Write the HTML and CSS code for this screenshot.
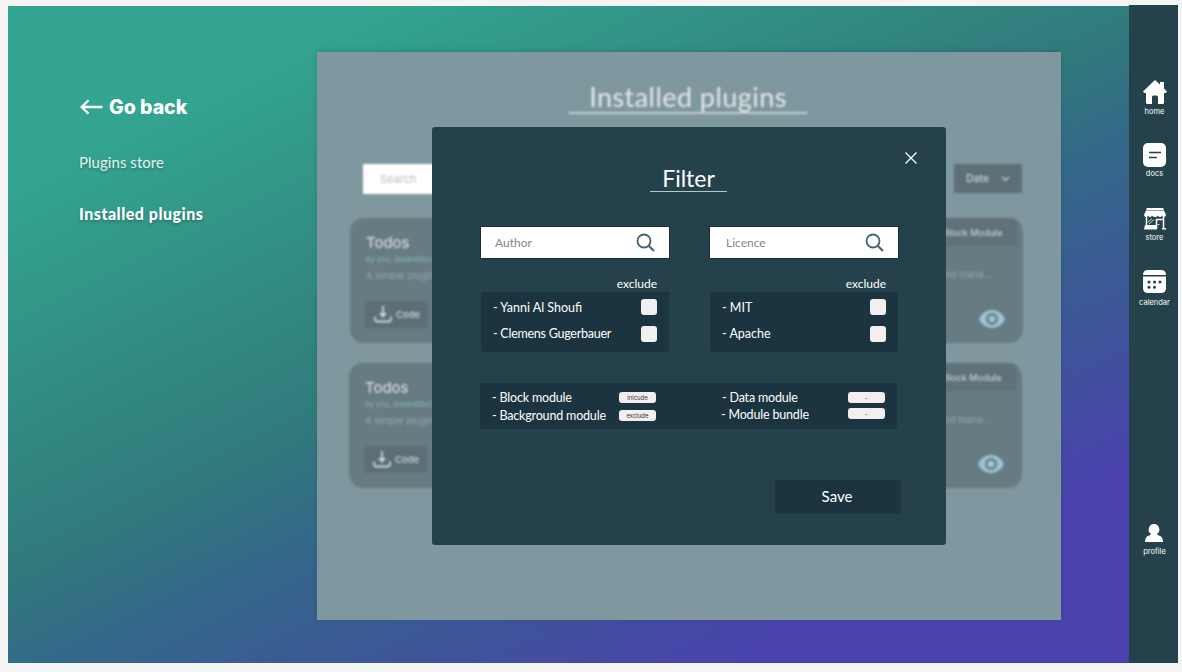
FILE: index.html
```
<!DOCTYPE html>
<html lang="en">
<head>
<meta charset="utf-8">
<title>Installed plugins</title>
<link rel="stylesheet" href="styles.css">
</head>
<body>
<svg class="defs" aria-hidden="true">
  <symbol id="i-search" viewBox="0 0 20 20"><circle cx="8" cy="8" r="6.5" fill="none" stroke="currentColor" stroke-width="1.8"/><path d="M12.7 12.7 18 18" stroke="currentColor" stroke-width="2"/></symbol>
  <symbol id="i-download" viewBox="0 0 18 17"><path d="M9 0v9M1 10.500V13a2.500 2.500 0 0 0 2.500 2.500h11A2.500 2.500 0 0 0 17 13v-2.500" fill="none" stroke="currentColor" stroke-width="1.800"/><path d="M5 7h8l-4 5z" fill="currentColor"/></symbol>
  <symbol id="i-eye" viewBox="0 0 26 18"><path fill="currentColor" fill-rule="evenodd" d="M13 0C7 0 2.500 3.500 0 9c2.500 5.500 7 9 13 9s10.500-3.500 13-9C23.500 3.500 19 0 13 0zm0 15a6 6 0 1 1 0-12 6 6 0 0 1 0 12zm0-2.500a3.500 3.500 0 1 0 0-7 3.500 3.500 0 0 0 0 7z"/></symbol>
</svg>
<div class="frame-label">Frame 26</div>
<div class="app">
  <nav class="side">
    <a class="back"><svg width="23" height="16" viewBox="0 0 23 16"><path d="M22.500 8H2M8.500 1.200 1.700 8l6.800 6.800" fill="none" stroke="#fff" stroke-width="2.300"/></svg><span>Go back</span></a>
    <a class="link">Plugins store</a>
    <a class="link current">Installed plugins</a>
  </nav>
  <main class="panel">
    <div class="content">
      <h1 class="title">Installed plugins</h1>
      <div class="tools"><div class="search">Search</div><div class="date">Date <svg width="9" height="6" viewBox="0 0 9 6"><path d="m1 1 3.500 3.500L8 1" fill="none" stroke="currentColor" stroke-width="1.200"/></svg></div></div>
      <section class="card">
        <div class="card-main"><h2>Todos</h2><p class="by">by you, lawandibo7</p><p class="desc">A simple plugin</p><div class="code"><svg width="18" height="17"><use href="#i-download"/></svg>Code</div></div>
        <div class="card-side"><div class="tag">Block Module</div><p class="more">and mana...</p><svg class="eye" width="26" height="18"><use href="#i-eye"/></svg></div>
      </section>
      <section class="card second">
        <div class="card-main"><h2>Todos</h2><p class="by">by you, lawandibo7</p><p class="desc">A simple plugin</p><div class="code"><svg width="18" height="17"><use href="#i-download"/></svg>Code</div></div>
        <div class="card-side"><div class="tag">Block Module</div><p class="more">and mana...</p><svg class="eye" width="26" height="18"><use href="#i-eye"/></svg></div>
      </section>
    </div>
    <div class="modal">
      <svg class="close" width="12" height="12" viewBox="0 0 12 12"><path d="M.5.500l11 11M11.500.500l-11 11" stroke="#fff" stroke-width="1.300"/></svg>
      <h2 class="modal-title">Filter</h2>
      <div class="columns">
        <div class="column">
          <div class="field"><span class="author">Author</span><svg width="20" height="20"><use href="#i-search"/></svg></div>
          <div class="exclude">exclude</div>
          <div class="list"><div class="row"><span>- Yanni Al Shoufi</span><i class="check"></i></div><div class="row"><span class="narrow">- Clemens Gugerbauer</span><i class="check"></i></div></div>
        </div>
        <div class="column">
          <div class="field"><span class="licence">Licence</span><svg width="20" height="20"><use href="#i-search"/></svg></div>
          <div class="exclude">exclude</div>
          <div class="list"><div class="row"><span>- MIT</span><i class="check"></i></div><div class="row"><span>- Apache</span><i class="check"></i></div></div>
        </div>
      </div>
      <div class="modules">
        <div class="group"><div class="mod"><span>- Block module</span><b class="pill">inlcude</b></div><div class="mod"><span>- Background module</span><b class="pill">exclude</b></div></div>
        <div class="group tight"><div class="mod"><span class="data">- Data module</span><b class="pill">-</b></div><div class="mod"><span class="bundle">- Module bundle</span><b class="pill">-</b></div></div>
      </div>
      <div class="save">Save</div>
    </div>
  </main>
  <aside class="rail">
    <a class="item home"><svg width="24" height="24" viewBox="0 0 24 24"><path fill="#fff" d="M12 0 0 11.500 1.200 13H3v9.500Q3 24 4.500 24H9v-7q0-1.500 1.500-1.500h3Q15 15.500 15 17v7h4.500q1.500 0 1.500-1.500V13h1.800l1.200-1.500-3-3V2h-4v2.500z"/></svg><span>home</span></a>
    <a class="item docs"><svg width="23" height="24" viewBox="0 0 23 24"><rect width="23" height="24" rx="5" fill="#fff"/><path d="M6 9.500h12M6 14.500h8" stroke="#25424c" stroke-width="1.600"/></svg><span>docs</span></a>
    <a class="item store"><svg width="22" height="22" viewBox="0 0 22 22"><path fill="#fff" d="M2.500 0h17v2h-17zM2 2.500h18l2 4.500q-.3 2-2 2t-2-1.500Q17.300 9 16 9t-2-1.500Q13 9 11 9T8 7.500Q7.300 9 6 9T4 7.500Q3.500 9 2 9T0 7z"/><path d="M2.500 8v11.500M19.500 8v13M12.500 21v-9.500h6" fill="none" stroke="#fff" stroke-width="1.500"/><path d="M1 17h11.500v4.500H0zM18 20h4v1.500h-4z" fill="#fff"/><path d="m4 14 4-3.500M5 16l5-4.500" stroke="#fff" stroke-width=".8"/><path d="M13.800 16.500h1.500" stroke="#fff"/></svg><span>store</span></a>
    <a class="item calendar"><svg width="23" height="23" viewBox="0 0 23 23"><path fill="#fff" d="M0 5q0-5 5-5h13q5 0 5 5zM0 6.500h23V18q0 5-5 5H5q-5 0-5-5z"/><g fill="#25424c"><circle cx="6" cy="12" r="1.500"/><circle cx="11.500" cy="12" r="1.500"/><circle cx="17" cy="12" r="1.500"/><circle cx="6" cy="17.300" r="1.500"/><circle cx="11.500" cy="17.300" r="1.500"/></g></svg><span>calendar</span></a>
    <a class="item profile"><svg width="18" height="18" viewBox="0 0 18 18"><path fill="#fff" d="M9 0a5.500 5.500 0 0 1 3 10q.2 1.200 2.500 1.800Q18 13 18 18H0q0-5 3.500-6.200Q5.800 11.200 6 10a5.500 5.500 0 0 1 3-10z"/></svg><span>profile</span></a>
  </aside>
</div>
</body>
</html>
```

FILE: styles.css
```
* { box-sizing: border-box; }
body { margin: 0; height: 672px; overflow: hidden; background: #f4f4f4; font-family: Lato, "Noto Sans", sans-serif; color: #fff; display: flow-root; }
h1, h2, p { margin: 0; font-weight: 400; }
.defs { position: absolute; width: 0; height: 0; }
.frame-label { height: 13px; margin-top: -7px; padding-left: 8px; font: 12.500px/6px Inter, sans-serif; color: #d8d8d8; }
.app { width: 1170px; height: 657px; margin-left: 8px; display: flex; background: linear-gradient(154deg, #33a48f 15%, #317a7c 46%, #34678a 56%, #3e5499 70%, #4a43ad 82%); }
.side { width: 309px; padding: 89px 0 0 72px; display: flex; flex-direction: column; align-items: flex-start; }
.back { display: flex; align-items: center; gap: 6px; height: 24px; font: 800 19.500px/24px Inter, sans-serif; }
.link { margin-top: 31px; height: 24px; margin-left: -1px; font: 400 15px/24px Lato, sans-serif; text-shadow: 0 2px 3px rgba(0,0,0,.25); letter-spacing: .05px; color: #e6f2ef; }
.current { margin-top: 28px; font-size: 16px; font-weight: 900; letter-spacing: .5px; color: #fff; }
.panel { position: relative; width: 744px; height: 568px; margin-top: 46px; background: #7f979e; box-shadow: 0 -1px 5px rgba(30,60,70,.25); }
.content { height: 568px; filter: blur(1px); display: flow-root; }
.title { width: 238px; height: 41px; margin: 21px 0 0 252px; border-bottom: 2px solid #c6d1d4; text-align: center; font-size: 27px; line-height: 48px; color: #e4eaeb; letter-spacing: .45px; white-space: nowrap; }
.tools { margin: 50px 39px 0 46px; display: flex; justify-content: space-between; }
.search { width: 300px; height: 30px; padding-left: 17px; background: #fff; color: #bcbcbc; font: 11px/30px Inter, sans-serif; }
.date { width: 68px; height: 29px; border-radius: 2px; background: #5d7077; display: flex; align-items: center; justify-content: center; gap: 12px; font: 500 10.500px Inter, sans-serif; color: #cdd5d7; }
.card { width: 673px; height: 125px; margin: 24px 0 0 33px; border-radius: 14px; background: #677b82; display: flex; justify-content: space-between; overflow: hidden; }
.card.second { margin: 20px 0 0 32px; }
.card-main { padding: 15px 0 0 16px; }
.card-main h2 { font: 500 14.800px/21px Inter, sans-serif; color: #d4dadc; }
.by { font: 500 7.500px/12px Inter, sans-serif; color: #82abb5; }
.desc { margin-top: 4px; font: 9.500px/12px Inter, sans-serif; color: #98a7ac; }
.code { margin-top: 19px; margin-left: -1px; width: 63px; height: 27px; border-radius: 2px; background: #5c6f76; display: flex; align-items: center; gap: 4px; padding-left: 9px; font: 500 9.500px Inter, sans-serif; color: #cfd7d9; }
.card-side { width: 90px; display: flex; flex-direction: column; }
.tag { width: 84px; height: 28px; background: #5f7279; padding-left: 11px; font: 500 9px/30px Inter, sans-serif; color: #c9d1d3; white-space: nowrap; }
.more { margin: 23px 0 0 7px; font: 9.300px/12px Inter, sans-serif; color: #99a8ad; }
.eye { margin: 29px 0 0 46px; color: #9dc4d2; }
.modal { position: absolute; left: 115px; top: 75px; width: 514px; height: 418px; border-radius: 3px; background: #25424c; display: flow-root; }
.close { position: absolute; right: 29px; top: 25px; }
.modal-title { width: 77px; height: 30px; margin: 35px auto 0 218px; border-bottom: 1px solid #b7c8cd; font-size: 23px; line-height: 32px; text-align: center; }
.columns { display: flex; gap: 41px; margin: 35px 0 0 49px; }
.column { width: 188px; }
.field { height: 31px; display: flex; align-items: center; justify-content: space-between; padding: 0 13px 0 15px; background: #fff; box-shadow: 0 0 0 1px rgba(15,30,35,.6); color: #858585; font-size: 12px; }
.author { margin-left: -1px; }
.licence { margin-left: 1px; }
.field svg { color: #3f6370; }
.exclude { height: 34px; padding: 17px 12px 0 0; text-align: right; font-size: 12px; line-height: 18px; }
.list { height: 60px; padding: 2px 12px 0 12px; border-radius: 2px; background: #1b343f; }
.row { height: 26.500px; display: flex; align-items: center; justify-content: space-between; font-size: 12.500px; }
.narrow { letter-spacing: -.25px; }
.check { width: 16px; height: 16px; border-radius: 3px; background: #f3eff0; }
.modules { display: flex; justify-content: space-between; width: 417px; height: 46px; margin: 31px 0 0 48px; padding: 5px 12px 0; border-radius: 2px; background: #1b343f; }
.group { width: 164px; letter-spacing: -.18px; }
.mod { height: 18px; display: flex; align-items: center; justify-content: space-between; font-size: 12.500px; white-space: nowrap; }
.tight { padding-top: 1px; }
.tight .mod { height: 16px; }
.data { margin-left: 1px; }
.bundle { margin-top: 2px; }
.pill { width: 37px; height: 11px; border-radius: 3px; background: #f3eff0; color: #333; font: 6px/11px Inter, sans-serif; text-align: center; letter-spacing: 0; }
.save { width: 126px; height: 34px; margin: 51px 0 0 343px; border-radius: 2px; background: #1b343f; text-align: center; font-size: 15px; line-height: 33px; padding-right: 2px; }
.rail { width: 49px; margin-left: auto; background: #25424c; display: flex; flex-direction: column; align-items: center; padding: 75px 0 0 2px; margin-top: -1px; }
.item { display: flex; flex-direction: column; align-items: center; font: 7.500px/10px Inter, sans-serif; gap: 3px; }
.docs { margin-top: 26px; gap: 2px; }
.store { margin-top: 29px; }
.calendar { margin-top: 27px; gap: 5px; }
.profile { margin-top: 216px; gap: 5px; }
```
